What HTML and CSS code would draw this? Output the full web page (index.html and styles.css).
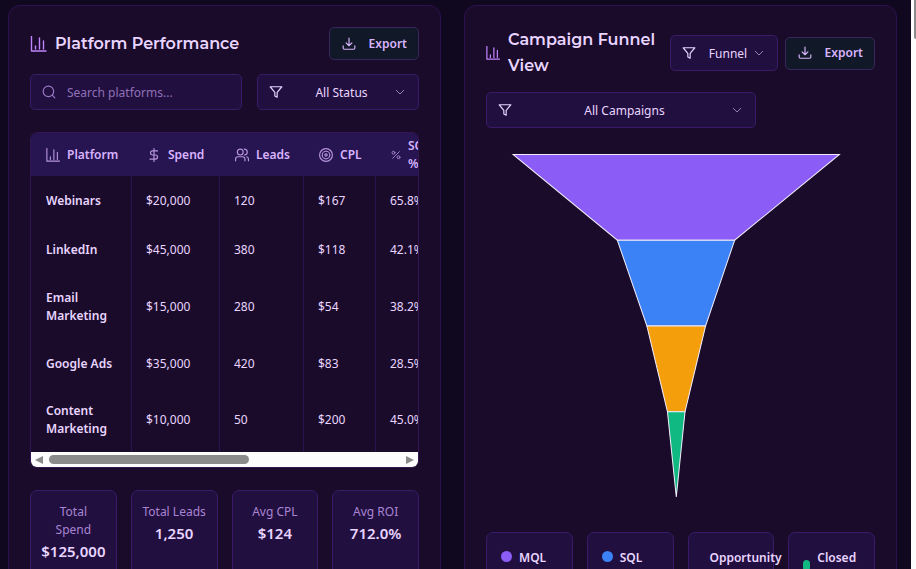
FILE: index.html
```html
<!DOCTYPE html>
<html lang="en">
<head>
<meta charset="utf-8">
<title>Campaign Dashboard</title>
<link rel="stylesheet" href="styles.css">
</head>
<body>
<svg class="defs" aria-hidden="true">
  <symbol id="chart" viewBox="0 0 16 16"><path d="M1 .5v14.5h14.5M5 10v3M9 2v11M13 5v8"/></symbol>
  <symbol id="download" viewBox="0 0 24 24"><path d="M12 2v13M7 10l5 5 5-5M2 15v4a2 2 0 0 0 2 2h16a2 2 0 0 0 2-2v-4"/></symbol>
  <symbol id="funnel" viewBox="0 0 24 24"><path d="M22 3H2l8 9.500V19l4 2v-8.500z"/></symbol>
  <symbol id="chevron" viewBox="0 0 24 24"><path d="m4 8 8 8 8-8"/></symbol>
  <symbol id="search" viewBox="0 0 24 24"><circle cx="11" cy="11" r="9"/><path d="m22 22-4.500-4.500"/></symbol>
  <symbol id="dollar" viewBox="0 0 24 24"><path d="M12 1v22M18 5H9.500a3.500 3.500 0 0 0 0 7h5a3.500 3.500 0 0 1 0 7H5"/></symbol>
  <symbol id="users" viewBox="0 0 24 24"><circle cx="9" cy="7" r="5"/><path d="M1 22v-3a4 4 0 0 1 4-4h8a4 4 0 0 1 4 4v3M23 22v-3a4 4 0 0 0-3-4M16 2a5 5 0 0 1 0 10"/></symbol>
  <symbol id="target" viewBox="0 0 24 24"><circle cx="12" cy="12" r="11"/><circle cx="12" cy="12" r="6.500"/><circle cx="12" cy="12" r="2"/></symbol>
  <symbol id="percent" viewBox="0 0 24 24"><path d="M20 4 4 20"/><circle cx="6" cy="6.500" r="3.500"/><circle cx="18" cy="17.500" r="3.500"/></symbol>
</svg>
<div class="app">
  <main class="board">
    <section class="panel">
      <header class="panel-head">
        <svg class="icon accent"><use href="#chart"/></svg>
        <h2>Platform Performance</h2>
        <button class="export" type="button"><svg class="icon"><use href="#download"/></svg>Export</button>
      </header>
      <div class="filters">
        <div class="field muted">
          <svg class="icon lead"><use href="#search"/></svg>
          <input type="text" placeholder="Search platforms..." aria-label="Search platforms">
        </div>
        <div class="field">
          <svg class="icon lead"><use href="#funnel"/></svg>
          <select aria-label="Status"><option>All Status</option></select>
          <svg class="caret"><use href="#chevron"/></svg>
        </div>
      </div>
      <div class="table-box">
        <div class="table-clip">
          <table>
            <colgroup><col class="c-name"><col class="c-spend"><col class="c-leads"><col class="c-small"><col class="c-small"></colgroup>
            <thead><tr>
              <th><span><svg class="icon bars"><use href="#chart"/></svg>Platform</span></th>
              <th><span><svg class="icon"><use href="#dollar"/></svg>Spend</span></th>
              <th><span><svg class="icon"><use href="#users"/></svg>Leads</span></th>
              <th><span><svg class="icon"><use href="#target"/></svg>CPL</span></th>
              <th><span><svg class="icon tiny"><use href="#percent"/></svg>SQL %</span></th>
            </tr></thead>
            <tbody>
              <tr><th>Webinars</th><td>$20,000</td><td>120</td><td>$167</td><td>65.8%</td></tr>
              <tr><th>LinkedIn</th><td>$45,000</td><td>380</td><td>$118</td><td>42.1%</td></tr>
              <tr><th>Email Marketing</th><td>$15,000</td><td>280</td><td>$54</td><td>38.2%</td></tr>
              <tr><th>Google Ads</th><td>$35,000</td><td>420</td><td>$83</td><td>28.5%</td></tr>
              <tr><th>Content Marketing</th><td>$10,000</td><td>50</td><td>$200</td><td>45.0%</td></tr>
            </tbody>
          </table>
        </div>
        <div class="hbar" aria-hidden="true"><i class="arrow-left"></i><div class="track"><div class="hthumb"></div></div><i class="arrow-right"></i></div>
      </div>
      <div class="cards">
        <div class="card stat"><span>Total Spend</span><strong>$125,000</strong></div>
        <div class="card stat"><span>Total Leads</span><strong>1,250</strong></div>
        <div class="card stat"><span>Avg CPL</span><strong>$124</strong></div>
        <div class="card stat"><span>Avg ROI</span><strong>712.0%</strong></div>
      </div>
    </section>

    <section class="panel">
      <header class="panel-head tall">
        <svg class="icon accent small"><use href="#chart"/></svg>
        <h2>Campaign Funnel View</h2>
        <div class="field view">
          <svg class="icon lead"><use href="#funnel"/></svg>
          <select aria-label="View"><option>Funnel</option></select>
          <svg class="caret"><use href="#chevron"/></svg>
        </div>
        <button class="export" type="button"><svg class="icon"><use href="#download"/></svg>Export</button>
      </header>
      <div class="field campaigns">
        <svg class="icon lead"><use href="#funnel"/></svg>
        <select aria-label="Campaign"><option>All Campaigns</option></select>
        <svg class="caret"><use href="#chevron"/></svg>
      </div>
      <svg class="chart" viewBox="0 0 388 343" role="img" aria-label="Funnel: MQL, SQL, Opportunity, Closed Won">
        <path fill="#8b5cf6" d="M27 1.500H352.500L248 87H131z"/>
        <path fill="#3b82f6" d="M131 87H248L219 172.500H160.500z"/>
        <path fill="#f59e0b" d="M160.500 172.500H219L198.500 258H181z"/>
        <path fill="#10b981" d="M181 258H198.500L189.800 343z"/>
      </svg>
      <div class="cards">
        <div class="card key"><i class="dot mql"></i><span>MQL</span></div>
        <div class="card key"><i class="dot sql"></i><span>SQL</span></div>
        <div class="card key"><i class="dot opp"></i><span>Opportunity</span></div>
        <div class="card key"><i class="dot won"></i><span>Closed Won</span></div>
      </div>
    </section>
  </main>
  <div class="rail" aria-hidden="true"><div class="rail-thumb"></div></div>
</div>
</body>
</html>
```
FILE: styles.css
```css
* { box-sizing: border-box; }
body {
  margin: 0;
  background: #10081f;
  color: #e9d5ff;
  font: 12px/18px "Segoe UI", "Noto Sans", sans-serif;
}
.defs { display: none; }
.app { display: flex; height: 100vh; overflow: hidden; }
.board {
  flex: 1;
  min-width: 0;
  display: grid;
  grid-template-columns: repeat(2, minmax(0, 1fr));
  gap: 23px;
  padding: 5px 14px 0 8px;
}
.panel {
  min-height: 720px;
  padding: 21px;
  background: #1a0b2b;
  border: 1px solid #2c1150;
  border-radius: 12px;
}
.panel-head { display: flex; align-items: center; gap: 8px; min-height: 33px; }
.panel-head.tall { min-height: 52px; }
h2 {
  flex: 1;
  margin: 0;
  font: 600 16px/26px Montserrat, Inter, sans-serif;
}
.icon {
  flex: none;
  width: 14px;
  height: 14px;
  fill: none;
  stroke: currentColor;
  stroke-width: 2;
  stroke-linecap: round;
  stroke-linejoin: round;
}
.accent { width: 17px; height: 16px; color: #c084fc; stroke-width: 1.4; }
.accent.small { width: 14px; height: 14px; }
.bars { stroke-width: 1.3; }
.export {
  flex: none;
  display: flex;
  align-items: center;
  justify-content: space-between;
  height: 33px;
  width: 90px;
  padding: 0 11px 0 12px;
  background: #111827;
  border: 1px solid #38265f;
  border-radius: 5px;
  color: #d8b4fe;
  font: inherit;
  font-weight: 600;
}
.filters { display: grid; grid-template-columns: 212fr 162fr; gap: 15px; margin: 14px 0 22px; }
.field {
  position: relative;
  height: 36px;
  background: #210f3f;
  border: 1px solid #3b1a68;
  border-radius: 5px;
}
.muted { color: #9a78c4; }
.lead { position: absolute; left: 11px; top: 10px; pointer-events: none; }
.caret {
  position: absolute;
  right: 12px;
  top: 11px;
  width: 12px;
  height: 12px;
  fill: none;
  stroke: #9480ad;
  stroke-width: 2;
  pointer-events: none;
}
.field input, .field select {
  width: 100%;
  height: 100%;
  padding: 1px 29px 0 36px;
  appearance: none;
  background: none;
  border: 0;
  color: #e9d5ff;
  font: inherit;
  text-align-last: center;
}
.field input { padding-right: 8px; text-align-last: left; }
.field input::placeholder { color: #9170b8; opacity: 1; }
.view { flex: none; width: 108px; margin-right: -1px; }
.view select { padding-right: 28px; }
.campaigns { width: 270px; max-width: 100%; margin: 13px 0 25px; }

.table-box { border: 1px solid #321552; border-radius: 7px; overflow: hidden; }
.table-clip { overflow: hidden; }
table { table-layout: fixed; width: 417px; border-collapse: separate; border-spacing: 0; }
.c-name { width: 101px; }
.c-spend { width: 88px; }
.c-leads { width: 84px; }
.c-small { width: 72px; }
th, td { height: 49px; padding: 14px 0 14px 15px; text-align: left; border-right: 1px solid #2a1450; }
td { padding-left: 14px; }
tbody tr:nth-child(3) > * { height: 65px; }
tbody th { font-weight: 600; padding-right: 14px; }
thead th { height: 43px; padding: 4px 14px 3px 15px; background: #271552; color: #d8b4fe; font-weight: 600; }
thead span { display: flex; align-items: center; gap: 7px; }
thead .icon { color: #b794dc; }
thead .tiny { width: 10px; height: 10px; }
.hbar { display: flex; align-items: center; gap: 6px; height: 15px; padding: 0 4px; background: #fcfcfc; }
.hbar i { border: 4px solid transparent; }
.hbar .arrow-left { border-right: 8px solid #8b8b8b; border-left: 0; }
.hbar .arrow-right { border-left: 8px solid #8b8b8b; border-right: 0; }
.track { flex: 1; }
.hthumb { width: 57%; height: 9px; border-radius: 5px; background: #8b8b8b; }

.cards { display: grid; grid-template-columns: repeat(4, minmax(0, 1fr)); gap: 14px; margin-top: 22px; }
.card { min-height: 96px; background: #210f3f; border: 1px solid #3b1a68; border-radius: 7px; }
.stat { display: flex; flex-direction: column; align-items: center; padding: 12px 10px; text-align: center; }
.stat span { color: #a985d3; }
.stat strong { font-size: 15px; line-height: 24px; font-weight: 600; }
.key { display: flex; align-items: flex-start; gap: 7px; padding: 16px 14px; font-weight: 600; }
.dot { flex: none; width: 11px; height: 11px; margin-top: 2px; border-radius: 6px; }
.mql { background: #8b5cf6; }
.sql { background: #3b82f6; }
.opp { width: 0; background: #f59e0b; }
.won { width: 7px; margin-top: 11px; background: #10b981; }
.chart { display: block; width: 100%; stroke: #f1ecfa; stroke-width: 1; }
.chart + .cards { margin-top: 35px; }

.rail { width: 5px; background: #fcfcfc; }
.rail-thumb { width: 2px; height: 39px; margin-left: auto; background: #8b8b8b; border-bottom-left-radius: 2px; }
```
